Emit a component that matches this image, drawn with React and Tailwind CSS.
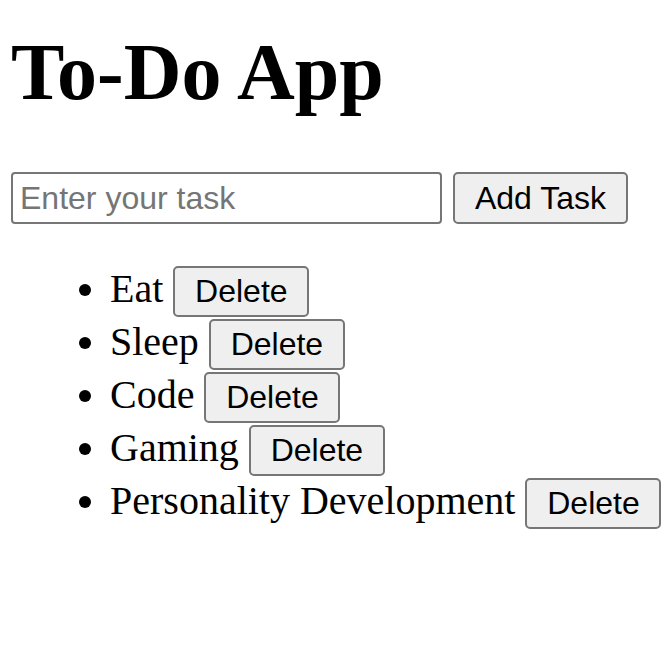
import React, { useState } from "react";

const serif = "font-['Liberation_Serif','Times_New_Roman',serif]";
const sans = "font-['Liberation_Sans',Arial,sans-serif]";

export default function App() {
  const [task, setTask] = useState("");
  const [tasks, setTasks] = useState(["Eat", "Sleep", "Code", "Gaming", "Personality Development"]);

  const addTask = () => {
    if (!task.trim()) return;
    setTasks([...tasks, task.trim()]);
    setTask("");
  };

  return (
    <div className={`min-h-[651px] bg-white px-[11px] pt-[26px] text-black ${serif}`}>
      <h1 className="text-[80px] font-bold leading-[92px]">To-Do App</h1>
      <div className="mt-[54px] flex items-stretch gap-[11px]">
        <input
          className={`h-[52px] w-[431px] rounded-[4px] border-2 border-[#767676] bg-white px-[7px] text-[32px] leading-[37px] outline-none placeholder:text-[#757575] ${sans}`}
          value={task}
          onChange={(event) => setTask(event.target.value)}
          placeholder="Enter your task"
        />
        <button
          onClick={addTask}
          className={`h-[52px] w-[175px] rounded-[5px] border-2 border-[#767676] bg-[#efefef] text-[32px] leading-[37px] ${sans}`}
        >
          Add Task
        </button>
      </div>
      <ul className="mt-[38px] list-disc pl-[99px] text-[40px]">
        {tasks.map((item, index) => (
          <li key={index} className="h-[53px] whitespace-nowrap leading-[54px]">
            {item}{" "}
            <button
              onClick={() => setTasks(tasks.filter((_, i) => i !== index))}
              className={`inline-block w-[136px] rounded-[5px] border-2 border-[#767676] bg-[#efefef] py-[5px] text-[32px] leading-[37px] ${sans}`}
            >
              Delete
            </button>
          </li>
        ))}
      </ul>
    </div>
  );
}
